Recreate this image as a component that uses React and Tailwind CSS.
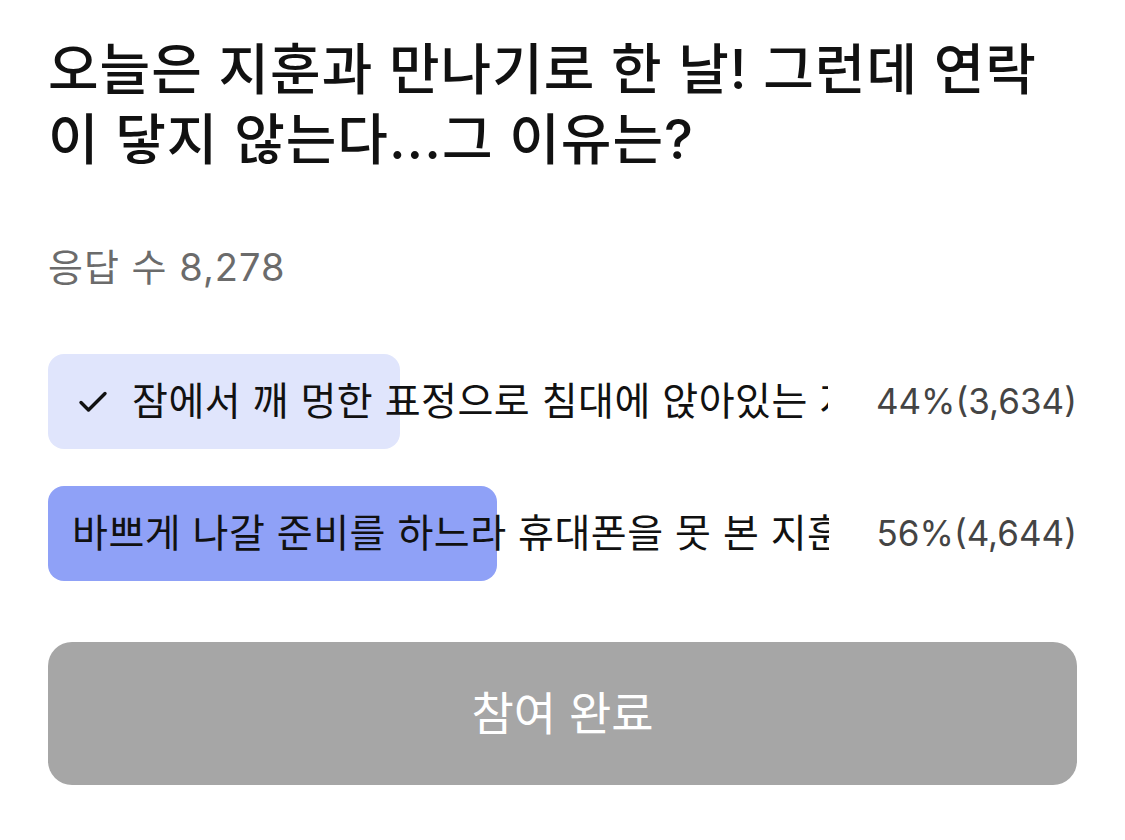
export default function App() {
  const font = { fontFamily: '"Inter", "Noto Sans CJK KR", sans-serif' };
  const options = [
    {
      label: '잠에서 깨 멍한 표정으로 침대에 앉아있는 지훈',
      pct: 44,
      count: '3,634',
      picked: true,
      fill: 352,
    },
    {
      label: '바쁘게 나갈 준비를 하느라 휴대폰을 못 본 지훈',
      pct: 56,
      count: '4,644',
      picked: false,
      fill: 449,
    },
  ];

  return (
    <div className="w-[1125px] h-[840px] bg-white px-12 pt-[34px]" style={font}>
      <h1 className="text-[55px] leading-[70px] font-medium text-[#111] tracking-[1px]">
        오늘은 지훈과 만나기로 한 날! 그런데 연락
        <br />이 닿지 않는다...그 이유는?
      </h1>

      <p className="mt-[73px] text-[38px] leading-[40px] text-[#6b6b6b] tracking-[1px]">응답 수 8,278</p>

      <div className="mt-[67px] flex flex-col gap-[37px]">
        {options.map((o) => (
          <div key={o.label} className="relative h-[95px] rounded-2xl">
            <div
              className={`absolute inset-y-0 left-0 rounded-2xl ${o.picked ? 'bg-[#e0e5fc]' : 'bg-[#8fa1f7]'}`}
              style={{ width: `${o.fill}px` }}
            />
            <div className="relative flex h-full items-center pl-6">
              {o.picked && (
                <svg className="mr-[18px] shrink-0" width="42" height="42" viewBox="0 0 42 42" fill="none">
                  <path d="M9 21.5l7.5 7.5L33 12.5" stroke="#111" strokeWidth="3.4" strokeLinecap="round" strokeLinejoin="round" />
                </svg>
              )}
              <div className="flex-1 overflow-hidden whitespace-nowrap text-[39px] font-normal text-[#111] tracking-[0.5px]">
                {o.label}
              </div>
              <div className="ml-[48px] shrink-0 text-[35px] text-[#444]">
                {o.pct}%({o.count})
              </div>
            </div>
          </div>
        ))}
      </div>

      <button className="mt-[61px] flex h-[143px] w-full items-center justify-center rounded-3xl bg-[#a6a6a6] text-[46px] font-normal text-white">
        참여 완료
      </button>
    </div>
  );
}
